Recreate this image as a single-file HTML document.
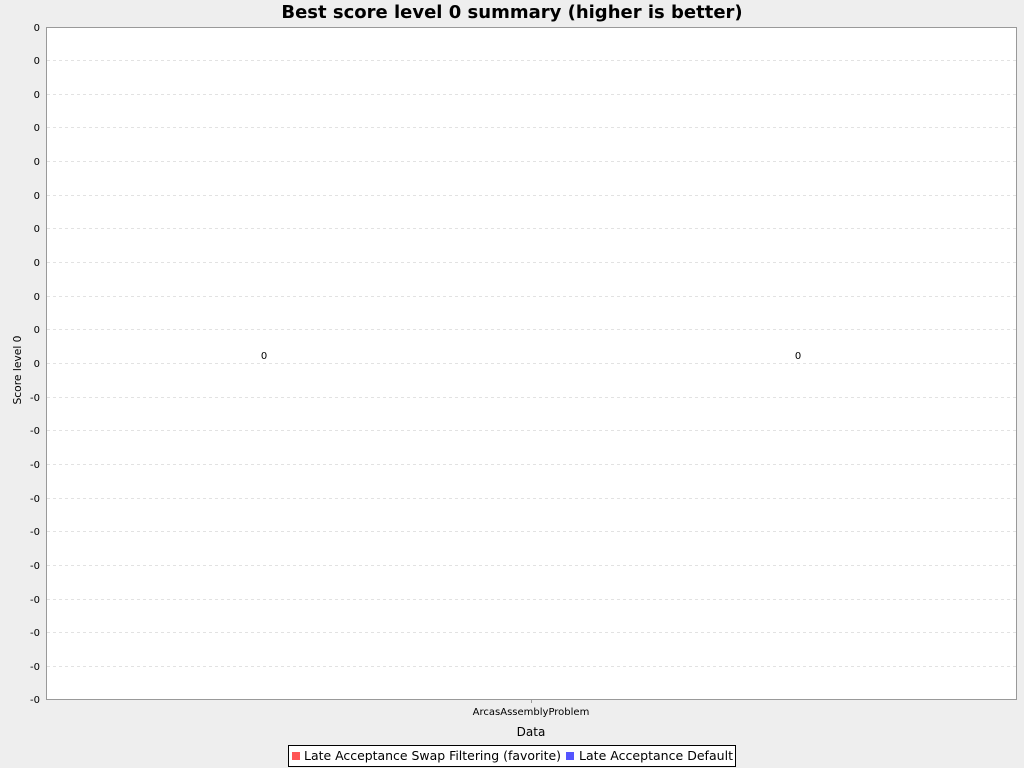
<!DOCTYPE html>
<html><head><meta charset="utf-8"><style>
html,body{margin:0;padding:0;background:#eeeeee;}
svg{display:block;font-family:"DejaVu Sans","Liberation Sans",sans-serif;}
</style></head><body>
<svg width="1024" height="768" xmlns="http://www.w3.org/2000/svg">
<rect width="1024" height="768" fill="#eeeeee"/>
<text x="512" y="18" text-anchor="middle" font-size="18" font-weight="bold" fill="#000">Best score level 0 summary (higher is better)</text>
<rect x="46.5" y="27.5" width="970" height="672" fill="#fff" stroke="#999" stroke-width="1"/>
<g stroke="#e2e2e2" stroke-width="1" stroke-dasharray="3,3">
<line x1="47" x2="1016" y1="60.5" y2="60.5"/>
<line x1="47" x2="1016" y1="94.5" y2="94.5"/>
<line x1="47" x2="1016" y1="127.5" y2="127.5"/>
<line x1="47" x2="1016" y1="161.5" y2="161.5"/>
<line x1="47" x2="1016" y1="195.5" y2="195.5"/>
<line x1="47" x2="1016" y1="228.5" y2="228.5"/>
<line x1="47" x2="1016" y1="262.5" y2="262.5"/>
<line x1="47" x2="1016" y1="296.5" y2="296.5"/>
<line x1="47" x2="1016" y1="329.5" y2="329.5"/>
<line x1="47" x2="1016" y1="363.5" y2="363.5"/>
<line x1="47" x2="1016" y1="397.5" y2="397.5"/>
<line x1="47" x2="1016" y1="430.5" y2="430.5"/>
<line x1="47" x2="1016" y1="464.5" y2="464.5"/>
<line x1="47" x2="1016" y1="498.5" y2="498.5"/>
<line x1="47" x2="1016" y1="531.5" y2="531.5"/>
<line x1="47" x2="1016" y1="565.5" y2="565.5"/>
<line x1="47" x2="1016" y1="599.5" y2="599.5"/>
<line x1="47" x2="1016" y1="632.5" y2="632.5"/>
<line x1="47" x2="1016" y1="666.5" y2="666.5"/>
</g>
<g font-size="10" fill="#000" text-anchor="end">
<text x="40" y="31">0</text>
<text x="40" y="64">0</text>
<text x="40" y="98">0</text>
<text x="40" y="131">0</text>
<text x="40" y="165">0</text>
<text x="40" y="199">0</text>
<text x="40" y="232">0</text>
<text x="40" y="266">0</text>
<text x="40" y="300">0</text>
<text x="40" y="333">0</text>
<text x="40" y="367">0</text>
<text x="40" y="401">-0</text>
<text x="40" y="434">-0</text>
<text x="40" y="468">-0</text>
<text x="40" y="502">-0</text>
<text x="40" y="535">-0</text>
<text x="40" y="569">-0</text>
<text x="40" y="603">-0</text>
<text x="40" y="636">-0</text>
<text x="40" y="670">-0</text>
<text x="40" y="703">-0</text>
</g>
<text x="21" y="370" font-size="11" text-anchor="middle" textLength="69" lengthAdjust="spacingAndGlyphs" transform="rotate(-90 21 370)">Score level 0</text>
<g font-size="10" text-anchor="middle">
<text x="264" y="359">0</text>
<text x="798" y="359">0</text>
<text x="531" y="715">ArcasAssemblyProblem</text>
</g>
<line x1="531.5" x2="531.5" y1="700" y2="703" stroke="#999"/>
<text x="531" y="736" font-size="12" text-anchor="middle">Data</text>
<rect x="288.5" y="745.5" width="447" height="21" fill="#fff" stroke="#000"/>
<rect x="292" y="752" width="8" height="8" fill="#ff5555"/>
<text x="304" y="760" font-size="12" textLength="257" lengthAdjust="spacingAndGlyphs">Late Acceptance Swap Filtering (favorite)</text>
<rect x="566" y="752" width="8" height="8" fill="#5555ff"/>
<text x="579" y="760" font-size="12" textLength="154" lengthAdjust="spacingAndGlyphs">Late Acceptance Default</text>
</svg>
</body></html>
